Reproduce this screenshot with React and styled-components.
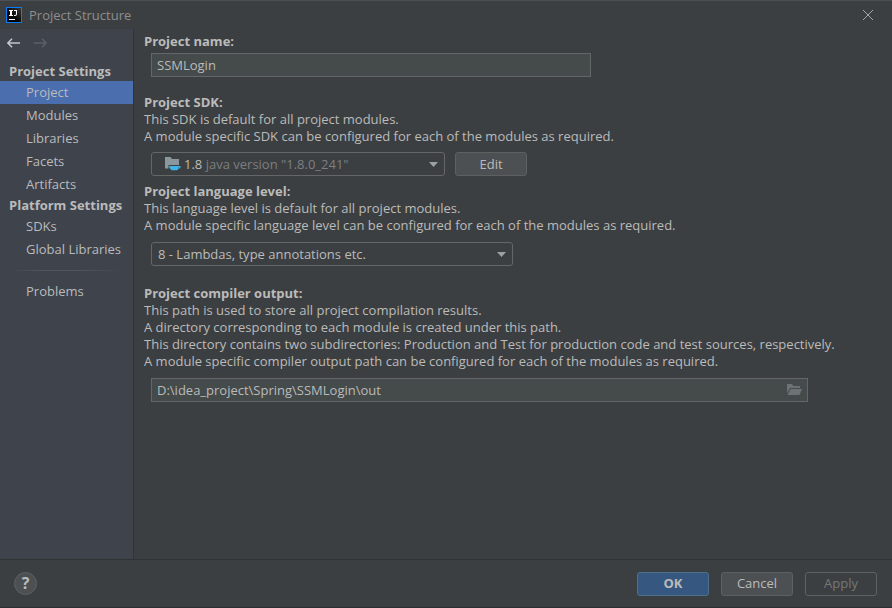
import React, { useState } from 'react'
import styled, { createGlobalStyle } from "styled-components";


const settingsGroups = [
    { title: 'Project Settings', items: ['Project', 'Modules', 'Libraries', 'Facets', 'Artifacts'] },
    { title: 'Platform Settings', items: ['SDKs', 'Global Libraries'] },
];


function IdeaLogo() {
    return (
        <svg width="16" height="16" viewBox="0 0 16 16" aria-hidden="true">
            <defs>
                <linearGradient id="logo" x1="0" y1="1" x2="1" y2="0">
                    <stop offset="0.4" stopColor="#050505" />
                    <stop offset="1" stopColor="#3a3a3a" />
                </linearGradient>
            </defs>
            <rect width="16" height="16" fill="#0a7cf5" />
            <rect x="1" y="1" width="14" height="14" fill="url(#logo)" />
            <path d="M3 3h4v1H6v4h1v1H3V8h1V4H3z" fill="#fff" />
            <path d="M8 3h3v4q0 2-2 2H8V8h1q1 0 1-1V4H8z" fill="#fff" />
            <path d="M3 12h6v1H3z" fill="#fff" />
        </svg>
    )
}

function CloseIcon() {
    return (
        <svg width="10" height="10" viewBox="0 0 10 10" aria-hidden="true">
            <path d="M0 0l10 10M10 0L0 10" stroke="#a4a6a7" strokeWidth="1" fill="none" />
        </svg>
    )
}

function ArrowIcon({ flip }) {
    return (
        <svg width="14" height="10" viewBox="0 0 14 10" aria-hidden="true">
            <path
                d={flip ? 'M0 5h12M8 .8L12.2 5 8 9.2' : 'M13 5H1M5 .8L.8 5 5 9.2'}
                fill="none"
                stroke="currentColor"
                strokeWidth="1.6"
            />
        </svg>
    )
}

function SdkIcon() {
    return (
        <svg width="16" height="14" viewBox="0 0 16 14" aria-hidden="true">
            <path d="M0 0h5.5l1.500 2h7v6H3.500v3.500H0z" fill="#8b979e" />
            <path d="M4 9h11.500v2.300h-1.700q-.6 1.300-1.900 1.900H6.600Q4 11.900 4 9z" fill="#3fb4e6" />
            <path d="M13.300 9.900h1.200v.7h-1.200z" fill="#3c3f41" />
        </svg>
    )
}

function FolderIcon() {
    return (
        <svg width="15" height="12" viewBox="0 0 15 12" aria-hidden="true">
            <path d="M0 0h5l1.500 2H13v2H3L0 9.500z" fill="#6d7274" />
            <path d="M3.500 5H15l-2.500 6H.5z" fill="#6d7274" />
        </svg>
    )
}

function ComboArrow() {
    return (
        <svg width="9" height="5" viewBox="0 0 9 5" aria-hidden="true">
            <path d="M0 0h9L4.500 5z" fill="#9da0a4" />
        </svg>
    )
}


function App() {
    const [page, setPage] = useState('Project');
    const [name, setName] = useState('SSMLogin');
    const [output, setOutput] = useState('D:\\idea_project\\Spring\\SSMLogin\\out');

    const renderItem = (item) => (
        <NavItem key={item} type="button" $active={item === page} onClick={() => setPage(item)}>
            {item}
        </NavItem>
    );

    return (
        <Dialog>
            <GlobalStyle />
            <TitleBar>
                <IdeaLogo />
                <Title>Project Structure</Title>
                <IconButton type="button" aria-label="Close"><CloseIcon /></IconButton>
            </TitleBar>

            <Body>
                <Sidebar>
                    <History>
                        <IconButton type="button" aria-label="Back"><ArrowIcon /></IconButton>
                        <IconButton type="button" aria-label="Forward" disabled><ArrowIcon flip /></IconButton>
                    </History>
                    {settingsGroups.map((group) => (
                        <React.Fragment key={group.title}>
                            <NavTitle>{group.title}</NavTitle>
                            {group.items.map(renderItem)}
                        </React.Fragment>
                    ))}
                    <Separator />
                    {renderItem('Problems')}
                </Sidebar>

                <Content>
                    <Section>
                        <Heading htmlFor="name">Project name:</Heading>
                        <Field $width={440} $gap={3}>
                            <TextInput id="name" value={name} onChange={(e) => setName(e.target.value)} />
                        </Field>
                    </Section>

                    <Section $top={17}>
                        <Heading htmlFor="sdk">Project SDK:</Heading>
                        <Text>This SDK is default for all project modules.</Text>
                        <Text>A module specific SDK can be configured for each of the modules as required.</Text>
                        <FieldRow>
                            <Combo $width={294}>
                                <Select id="sdk" $custom>
                                    <option>1.8 java version "1.8.0_241"</option>
                                </Select>
                                <SdkValue aria-hidden="true">
                                    <SdkIcon />
                                    <span>1.8 <Muted>java version "1.8.0_241"</Muted></span>
                                </SdkValue>
                                <Arrow><ComboArrow /></Arrow>
                            </Combo>
                            <Button type="button">Edit</Button>
                        </FieldRow>
                    </Section>

                    <Section $top={7}>
                        <Heading htmlFor="level">Project language level:</Heading>
                        <Text>This language level is default for all project modules.</Text>
                        <Text>A module specific language level can be configured for each of the modules as required.</Text>
                        <FieldRow $gap={8}>
                            <Combo $width={362}>
                                <Select id="level">
                                    <option>8 - Lambdas, type annotations etc.</option>
                                </Select>
                                <Arrow><ComboArrow /></Arrow>
                            </Combo>
                        </FieldRow>
                    </Section>

                    <Section $top={19}>
                        <Heading htmlFor="output">Project compiler output:</Heading>
                        <Text>This path is used to store all project compilation results.</Text>
                        <Text>A directory corresponding to each module is created under this path.</Text>
                        <Text>This directory contains two subdirectories: Production and Test for production code and test sources, respectively.</Text>
                        <Text>A module specific compiler output path can be configured for each of the modules as required.</Text>
                        <Field $width={657} $gap={8}>
                            <TextInput id="output" value={output} onChange={(e) => setOutput(e.target.value)} />
                            <IconButton type="button" aria-label="Browse"><FolderIcon /></IconButton>
                        </Field>
                    </Section>
                </Content>
            </Body>

            <Footer>
                <HelpButton type="button" aria-label="Help">?</HelpButton>
                <Button type="button" $primary>OK</Button>
                <Button type="button">Cancel</Button>
                <Button type="button" disabled>Apply</Button>
            </Footer>
        </Dialog>
    )
}


const GlobalStyle = createGlobalStyle`
  * {
    box-sizing: border-box;
  }
  body {
    margin: 0;
    background: #3c3f41;
  }
  body, button, input, select {
    font-family: "Open Sans", "Noto Sans", sans-serif;
    font-size: 13px;
    line-height: 17px;
    color: #bbbbbb;
  }
`;

const Dialog = styled.div`
  display: flex;
  flex-direction: column;
  min-height: 100vh;
  border-top: 1px solid #4d5052;
  border-bottom: 1px solid #2b2d35;
`;

const TitleBar = styled.header`
  display: flex;
  align-items: center;
  height: 28px;
  padding: 0 19px 0 6px;
  gap: 7px;
`;

const Title = styled.h1`
  flex: 1;
  margin: 0;
  font-size: 13px;
  font-weight: 400;
  color: #8c8e8f;
`;

const IconButton = styled.button`
  display: flex;
  padding: 0;
  border: 0;
  background: none;
  color: #c4c6c8;
  &:disabled {
    color: #5c6066;
  }
`;

const Body = styled.div`
  display: flex;
  flex: 1;
`;

const Sidebar = styled.nav`
  flex: 0 0 134px;
  background: #3e434c;
  border-right: 1px solid #323438;
`;

const History = styled.div`
  display: flex;
  align-items: center;
  gap: 13px;
  height: 33px;
  padding: 0 7px 5px;
`;

const NavTitle = styled.h2`
  margin: 0;
  padding-left: 9px;
  font-size: 13px;
  font-weight: 700;
  line-height: 19px;
`;

const NavItem = styled.button`
  display: block;
  width: 100%;
  padding: 0 0 0 26px;
  border: 0;
  line-height: 23px;
  text-align: left;
  white-space: nowrap;
  background: ${({ $active }) => ($active ? '#4b6eaf' : 'transparent')};
`;

const Separator = styled.hr`
  height: 1px;
  margin: 9px 8px;
  border: 0;
  background: linear-gradient(to right, transparent, #53565b 30%, #53565b 60%, transparent);
`;

const Content = styled.main`
  flex: 1;
  min-width: 0;
  padding: 4px 10px;
`;

const Section = styled.section`
  margin-top: ${({ $top }) => $top || 0}px;
`;

const Heading = styled.label`
  display: block;
  font-weight: 700;
`;

const Text = styled.p`
  margin: 0;
`;

const Field = styled.div`
  display: flex;
  align-items: center;
  max-width: ${({ $width }) => $width}px;
  height: 24px;
  margin: ${({ $gap }) => $gap}px 0 0 7px;
  padding: 0 5px;
  border: 1px solid #646668;
  background: #454a4a;
`;

const TextInput = styled.input`
  flex: 1;
  min-width: 0;
  padding: 0;
  border: 0;
  outline: 0;
  background: none;
`;

const FieldRow = styled.div`
  display: flex;
  gap: 10px;
  margin: ${({ $gap }) => $gap || 7}px 0 0 7px;
`;

const Combo = styled.div`
  display: grid;
  align-items: center;
  width: ${({ $width }) => $width}px;
  height: 24px;
  > * {
    grid-area: 1 / 1;
  }
`;

const Select = styled.select`
  width: 100%;
  height: 100%;
  padding: 0 24px 0 6px;
  border: 1px solid #646668;
  border-radius: 3px;
  appearance: none;
  background: #3c3f41;
  color: ${({ $custom }) => ($custom ? 'transparent' : '#bbbbbb')};
`;

const SdkValue = styled.span`
  display: flex;
  align-items: center;
  gap: 3px;
  padding-left: 14px;
  pointer-events: none;
`;

const Muted = styled.span`
  color: #7c7e80;
`;

const Arrow = styled.span`
  display: flex;
  justify-self: end;
  padding-right: 7px;
  pointer-events: none;
`;

const Button = styled.button`
  width: 72px;
  height: 24px;
  padding: 0;
  border: 1px solid ${({ $primary }) => ($primary ? '#4c708c' : '#5e6162')};
  border-radius: 3px;
  background: ${({ $primary }) => ($primary ? '#365880' : '#4c5052')};
  font-weight: ${({ $primary }) => ($primary ? 700 : 400)};
  &:disabled {
    background: none;
    color: #75787a;
  }
`;

const Footer = styled.footer`
  display: flex;
  align-items: center;
  gap: 12px;
  height: 48px;
  padding: 0 15px 0 14px;
  border-top: 1px solid #303234;
`;

const HelpButton = styled.button`
  width: 23px;
  height: 23px;
  margin-right: auto;
  padding: 0;
  border: 1px solid #5e6162;
  border-radius: 50%;
  background: #4c5052;
  font-size: 16px;
  font-weight: 700;
`;


export default App
